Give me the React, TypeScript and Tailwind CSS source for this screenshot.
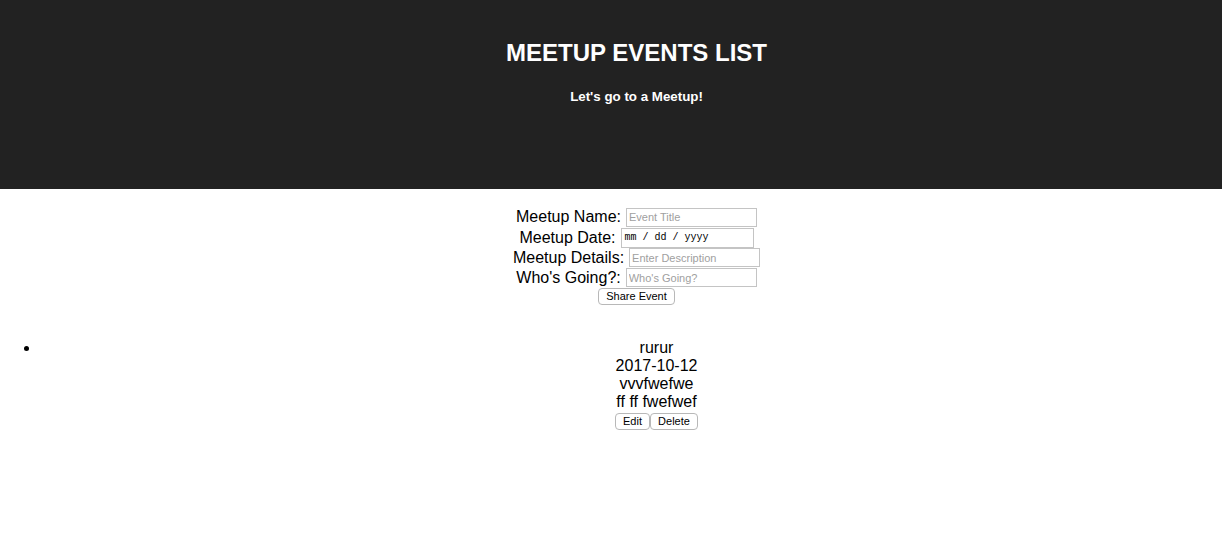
import React from "react";

const font = { fontFamily: '"Liberation Sans", Arial, Helvetica, sans-serif' };

function Field({
  label,
  placeholder,
  rowClass,
}: {
  label: string;
  placeholder: string;
  rowClass: string;
}) {
  return (
    <div className={`flex items-center justify-center gap-[5px] ${rowClass}`}>
      <label className="text-[16px] leading-[18px] text-black">{label}</label>
      <input
        type="text"
        placeholder={placeholder}
        className="w-[131px] h-[19px] border border-[#c4c4c4] bg-white px-[2px] text-[11px] text-black placeholder:text-[#a0a0a0] outline-none"
      />
    </div>
  );
}

export default function App() {
  return (
    <div className="w-full overflow-hidden bg-white min-h-[553px]" style={font}>
      <div className="w-[1273px]">
        <header className="h-[189px] bg-[#222222] pt-[39px] text-center text-white">
          <h1 className="text-[24px] leading-[28px] font-bold">MEETUP EVENTS LIST</h1>
          <h5 className="mt-[22px] text-[13.33px] leading-[16px] font-bold">
            Let's go to a Meetup!
          </h5>
        </header>

        <form className="mt-[18px] flex flex-col" onSubmit={(e) => e.preventDefault()}>
          <Field label="Meetup Name:" placeholder="Event Title" rowClass="h-[20px]" />
          <div className="flex h-[21px] items-center justify-center gap-[5px]">
            <label className="text-[16px] leading-[18px] text-black">Meetup Date:</label>
            <div
              className="flex h-[20px] w-[133px] items-center whitespace-pre border border-[#c4c4c4] bg-white px-[3px] text-[10px] text-black"
              style={{ fontFamily: '"Liberation Mono", "Courier New", monospace' }}
            >
              mm / dd / yyyy
            </div>
          </div>
          <Field label="Meetup Details:" placeholder="Enter Description" rowClass="h-[19px]" />
          <Field label="Who's Going?:" placeholder="Who's Going?" rowClass="h-[21px]" />
          <div className="flex justify-center">
            <button
              type="submit"
              className="h-[17px] w-[77px] rounded-[4px] border border-[#b8b8b8] bg-white text-[11px] leading-[15px] text-black"
            >
              Share Event
            </button>
          </div>
        </form>

        <ul className="mt-[34px] list-disc pl-10">
          <li className="text-center text-[16px] leading-[18px] text-black">
            <div>rurur</div>
            <div>2017-10-12</div>
            <div>vvvfwefwe</div>
            <div>ff ff fwefwef</div>
            <div className="mt-[2px] flex justify-center">
              <button className="h-[17px] w-[35px] rounded-[4px] border border-[#b8b8b8] bg-white text-[11px] leading-[15px]">
                Edit
              </button>
              <button className="h-[17px] w-[48px] rounded-[4px] border border-[#b8b8b8] bg-white text-[11px] leading-[15px]">
                Delete
              </button>
            </div>
          </li>
        </ul>
      </div>
    </div>
  );
}
